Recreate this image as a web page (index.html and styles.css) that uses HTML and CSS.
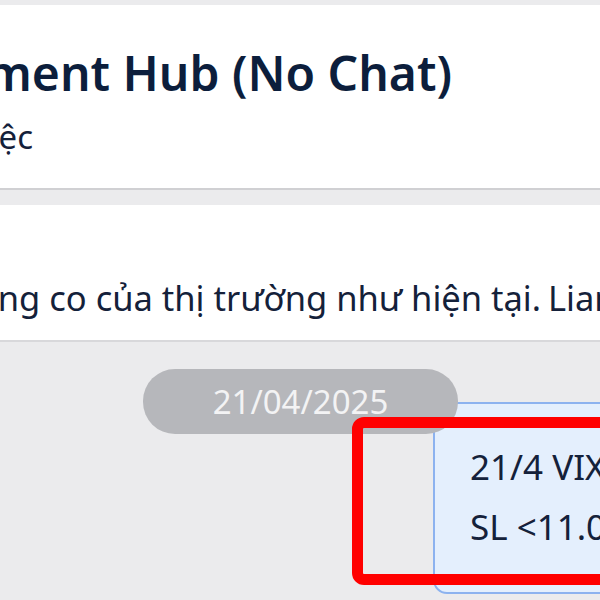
FILE: index.html
```html
<!DOCTYPE html>
<html lang="vi">
<head>
    <meta charset="UTF-8">
    <meta name="viewport" content="width=device-width, initial-scale=1.0">
    <title>Investment Hub (No Chat)</title>
    <link rel="stylesheet" href="styles.css">
</head>
<body>
    <div class="page">
        <div class="header">
            <h1>Investment Hub (No Chat)</h1>
            <div class="sub">
                <p>Không gian làm việc</p>
            </div>
        </div>

        <div class="notice">
            <div class="notice-line">
                <p>Thận trọng trước sự co giật, khó đoán và sự cộng hưởng co của thị trường như hiện tại.</p>
            </div>
            <span class="tail">Liam</span>
        </div>

        <div class="chat">
            <div class="date-pill">21/04/2025</div>
            <div class="bubble-row">
                <div class="bubble">
                    <p>21/4 VIX mua 11.50</p>
                    <p>SL &lt;11.00</p>
                </div>
                <div class="mark"></div>
            </div>
        </div>
    </div>
</body>
</html>
```

FILE: styles.css
```css
* {
    margin: 0;
    padding: 0;
    box-sizing: border-box;
}

body {
    font-family: 'Noto Sans', 'DejaVu Sans', sans-serif;
    color: #14213a;
    background-color: #ebebed;
    overflow: hidden;
}

.page {
    width: 600px;
    height: 600px;
    padding-top: 5px;
    overflow: hidden;
}

.header {
    background: white;
    height: 185px;
    border-bottom: 2px solid #d0d0d3;
    padding-top: 37px;
    white-space: nowrap;
}

/* only the tail of the title is on screen, the rest runs off the left edge */
.header h1 {
    display: flex;
    justify-content: flex-end;
    width: 452px;
    font-size: 48px;
    font-weight: 600;
    color: #0c1e3c;
    line-height: 62px;
}

.sub {
    display: flex;
    justify-content: flex-end;
    width: 33px;
    margin-top: 11px;
}

.sub p {
    font-size: 33px;
    line-height: 44px;
}

.notice {
    display: flex;
    align-items: baseline;
    gap: 7px;
    background: white;
    margin-top: 15px;
    height: 137px;
    border-bottom: 2px solid #d8d8db;
    padding-top: 70px;
    white-space: nowrap;
}

.notice-line {
    display: flex;
    justify-content: flex-end;
    width: 541px;
    flex-shrink: 0;
}

.notice p,
.tail {
    font-size: 34.5px;
    line-height: 46px;
}

.chat {
    padding-top: 27px;
}

.date-pill {
    position: relative;
    z-index: 1;
    width: 315px;
    height: 65px;
    margin-left: 143px;
    border-radius: 32px;
    background: #b6b7bb;
    color: #f3f3f4;
    font-size: 33px;
    line-height: 65px;
    text-align: center;
}

.bubble-row {
    position: relative;
    margin-top: -32px;
    padding-left: 433px;
}

.bubble {
    width: 400px;
    height: 192px;
    background: #e4effd;
    border: 2px solid #8cb2ef;
    border-radius: 14px;
    padding: 33px 0 0 35px;
    font-size: 35px;
    line-height: 60px;
    color: #14213a;
    white-space: nowrap;
}

.mark {
    position: absolute;
    z-index: 2;
    left: 352px;
    top: 15px;
    width: 400px;
    height: 168px;
    border: 11px solid #ff0000;
    border-radius: 12px;
}
```
